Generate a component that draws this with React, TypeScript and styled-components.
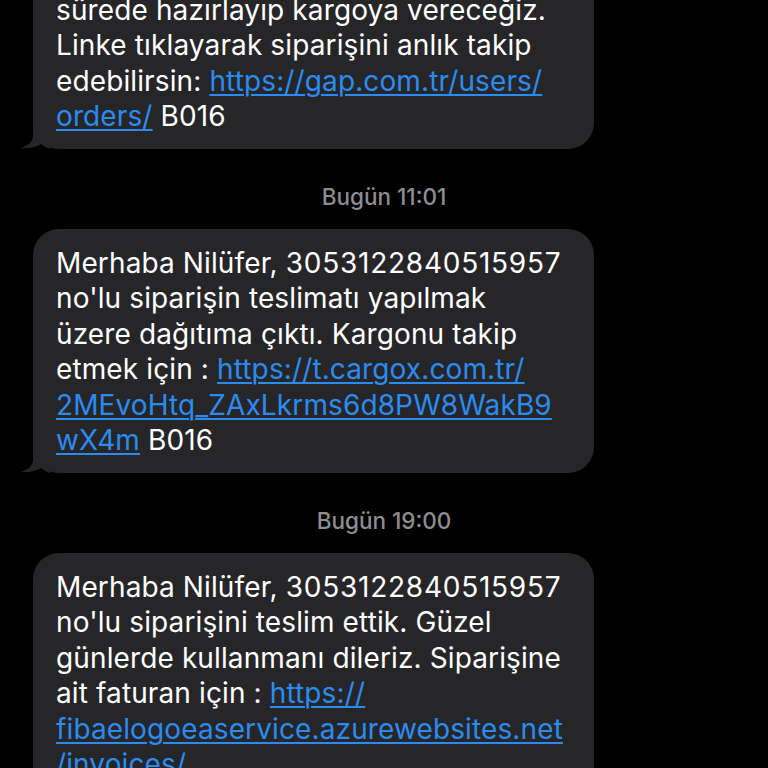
import React from "react";
import styled, { createGlobalStyle } from "styled-components";

const GlobalStyle = createGlobalStyle`
    html, body {
        margin: 0;
        padding: 0;
        background: #000;
    }
    body {
        font-family: Inter, Roboto, "Noto Sans", Arial, sans-serif;
        -webkit-font-smoothing: antialiased;
    }
`;

const Viewport = styled.div`
    width: 768px;
    height: 768px;
    overflow: hidden;
    background: #000;
`;

/* scroll offset of the conversation: the first bubble starts above the screen */
const Thread = styled.div<{ $scroll: number }>`
    display: flex;
    flex-direction: column;
    margin-top: ${(p) => -p.$scroll}px;
    padding: 0 0 40px 0;
`;

const Stamp = styled.div`
    align-self: center;
    margin: 36px 0 20px;
    font-size: 22.5px;
    line-height: 24px;
    font-weight: 500;
    color: #8d8d92;
`;

const Row = styled.div`
    display: flex;
    padding-left: 33px;
`;

const Bubble = styled.div`
    position: relative;
    width: 561px;
    box-sizing: border-box;
    padding: 17px 20px 14px 23px;
    background: #262628;
    border-radius: 26px;
    color: #fff;
    font-size: 28px;
    line-height: 35.5px;
    letter-spacing: 0.12px;
`;

const Line = styled.div`
    white-space: nowrap;
`;

/* SF digits run wider than Inter's */
const Num = styled.span`
    letter-spacing: 0.75px;
`;

const Link = styled.a`
    color: #2a8cf0;
    text-decoration: underline;
    text-decoration-thickness: 1.5px;
    text-underline-offset: 3px;
`;

const Tail = styled.svg`
    position: absolute;
    left: -13px;
    bottom: 0;
    width: 30px;
    height: 34px;
`;

function BubbleTail() {
    return (
        <Tail viewBox="0 0 30 34">
            <path d="M13 0 L13 20 C13 26 9 30 1 33 C8 34 16 32 21 29 C24 31 27 33 30 34 L30 0 Z" fill="#262628" />
        </Tail>
    );
}

function Text({ value }: { value: string }) {
    const bits = value.split(/(\d{4,})/);
    return (
        <>
            {bits.map((b, i) => (/^\d{4,}$/.test(b) ? <Num key={i}>{b}</Num> : <span key={i}>{b}</span>))}
        </>
    );
}

type Part = string | { link: string };

const messages: { stamp?: string; lines: Part[][] }[] = [
    {
        lines: [
            ["no'lu siparişin için teşekkür ederiz. En kısa"],
            ["sürede hazırlayıp kargoya vereceğiz."],
            ["Linke tıklayarak siparişini anlık takip"],
            ["edebilirsin: ", { link: "https://gap.com.tr/users/" }],
            [{ link: "orders/" }, " B016"],
        ],
    },
    {
        stamp: "Bugün 11:01",
        lines: [
            ["Merhaba Nilüfer, 3053122840515957"],
            ["no'lu siparişin teslimatı yapılmak"],
            ["üzere dağıtıma çıktı. Kargonu takip"],
            ["etmek için : ", { link: "https://t.cargox.com.tr/" }],
            [{ link: "2MEvoHtq_ZAxLkrms6d8PW8WakB9" }],
            [{ link: "wX4m" }, " B016"],
        ],
    },
    {
        stamp: "Bugün 19:00",
        lines: [
            ["Merhaba Nilüfer, 3053122840515957"],
            ["no'lu siparişini teslim ettik. Güzel"],
            ["günlerde kullanmanı dileriz. Siparişine"],
            ["ait faturan için : ", { link: "https://" }],
            [{ link: "fibaelogoeaservice.azurewebsites.net" }],
            [{ link: "/invoices/" }],
            [{ link: "3053122840515957" }, " B016"],
        ],
    },
];

export default function App() {
    return (
        <Viewport>
            <GlobalStyle />
            <Thread $scroll={60}>
                {messages.map((m, i) => (
                    <React.Fragment key={i}>
                        {m.stamp ? <Stamp>{m.stamp}</Stamp> : null}
                        <Row>
                            <Bubble>
                                {m.lines.map((line, j) => (
                                    <Line key={j}>
                                        {line.map((part, k) =>
                                            typeof part === "string" ? (
                                                <Text key={k} value={part} />
                                            ) : (
                                                <Link key={k} href="#">
                                                    {part.link}
                                                </Link>
                                            )
                                        )}
                                    </Line>
                                ))}
                                <BubbleTail />
                            </Bubble>
                        </Row>
                    </React.Fragment>
                ))}
            </Thread>
        </Viewport>
    );
}
